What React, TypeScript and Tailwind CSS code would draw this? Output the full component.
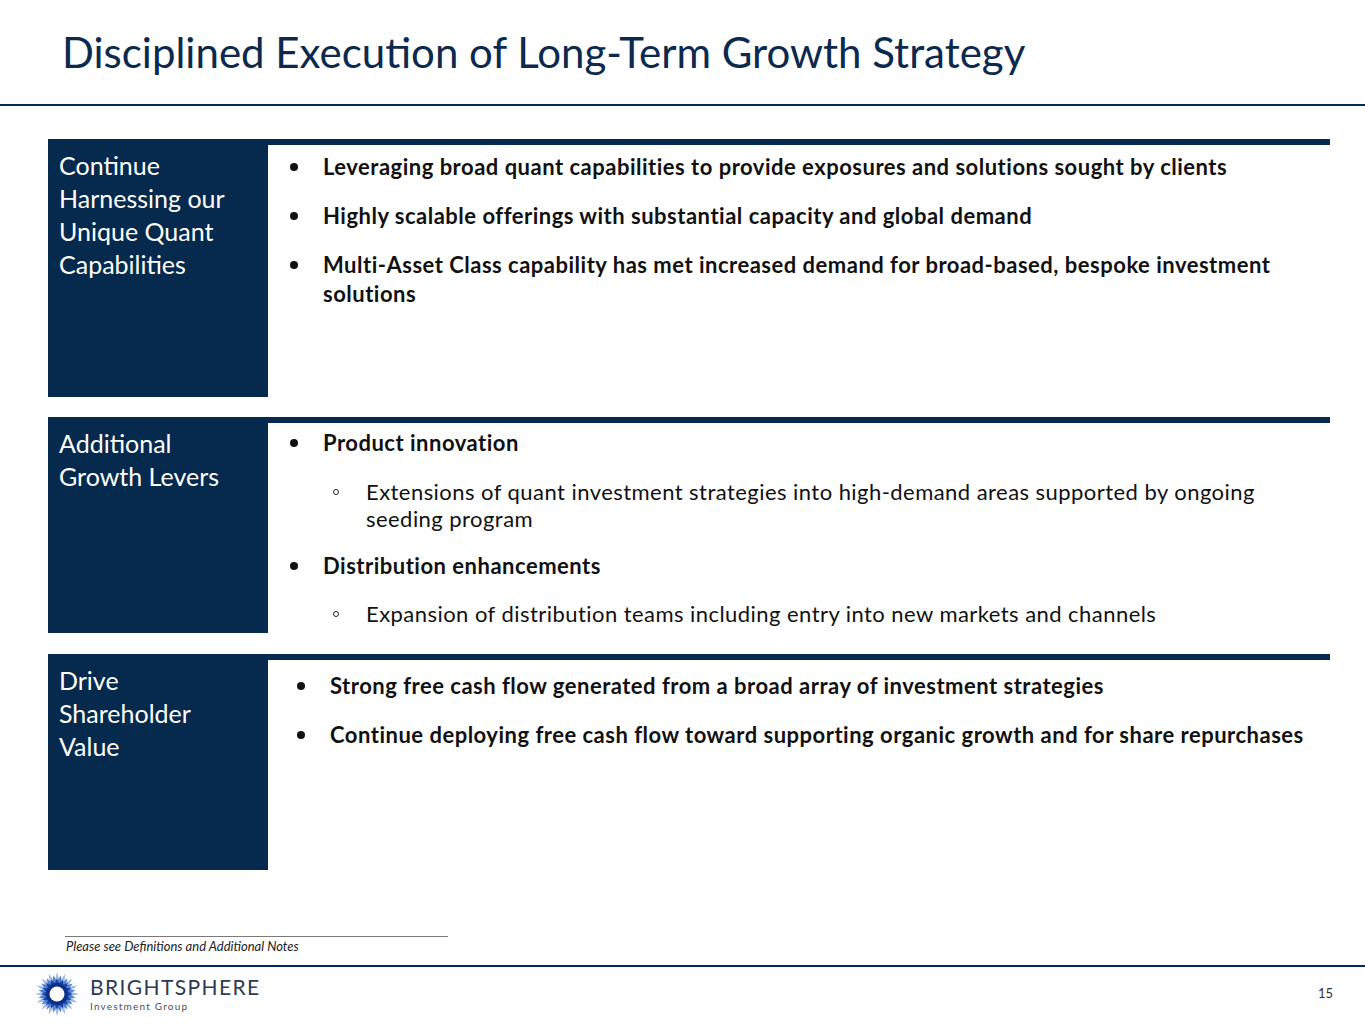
const NAVY = "#062a4d";

function Logo() {
  const star = (n: number, rOut: number, rIn: number, rot: number) => {
    const pts: string[] = [];
    for (let i = 0; i < n * 2; i++) {
      const r = i % 2 === 0 ? rOut : rIn;
      const a = ((i * 180) / n + rot - 90) * (Math.PI / 180);
      pts.push(`${(22 + r * Math.cos(a)).toFixed(2)},${(22 + r * Math.sin(a)).toFixed(2)}`);
    }
    return pts.join(" ");
  };
  return (
    <svg width="44" height="44" viewBox="0 0 44 44">
      <polygon points={star(16, 22, 13, 0)} fill="#9dbbe6" />
      <polygon points={star(16, 19, 12, 11.25)} fill="#4f7fd0" />
      <polygon points={star(16, 15.5, 11, 0)} fill="#1b45a8" />
      <circle cx="22" cy="22" r="11" fill="#0d2f8a" />
      <circle cx="22" cy="22" r="7.5" fill="#ffffff" />
    </svg>
  );
}

function Bullet({ children }: { children: React.ReactNode }) {
  return (
    <div className="flex">
      <span className="flex h-[29px] w-[30px] shrink-0 items-center">
        <span className="ml-[-3px] h-[8px] w-[8px] rounded-full bg-[#111]" />
      </span>
      <div className="text-[22px] font-bold leading-[29px] tracking-[0.5px]">{children}</div>
    </div>
  );
}

function SubBullet({ children }: { children: React.ReactNode }) {
  return (
    <div className="flex pl-[43px]">
      <span className="flex h-[27px] w-[30px] shrink-0 items-center">
        <span className="ml-[-3px] h-[6px] w-[6px] rounded-full border border-[#222]" />
      </span>
      <div className="text-[22px] leading-[27px] tracking-[0.45px]">{children}</div>
    </div>
  );
}

function Section({
  label,
  height,
  children,
  contentClass,
}: {
  label: React.ReactNode;
  height: string;
  children: React.ReactNode;
  contentClass: string;
}) {
  return (
    <div className={`flex ${height}`}>
      <div className="w-[220px] shrink-0 bg-[#062a4d] pl-[11px] pt-[10px] text-[25px] leading-[33px] text-white">
        {label}
      </div>
      <div className={`flex-1 border-t-[6px] border-[#062a4d] ${contentClass}`}>{children}</div>
    </div>
  );
}

export default function App() {
  return (
    <div
      className="h-[1024px] w-full overflow-hidden bg-white text-[#111]"
      style={{ fontFamily: "Lato, 'Open Sans', sans-serif" }}
    >
      {/* Title */}
      <div className="h-[104px] pl-[62px] pt-[27px]">
        <h1 className="text-[42px] leading-[50px] text-[#0b2a4e]">
          Disciplined Execution of Long-Term Growth Strategy
        </h1>
      </div>
      <div className="h-[2px] w-full" style={{ backgroundColor: NAVY }} />

      {/* Sections */}
      <div className="ml-[48px] mt-[33px] w-[1282px]">
        <Section
          height="h-[258px]"
          contentClass="pl-[25px] pt-[7px]"
          label={
            <>
              Continue
              <br />
              Harnessing our
              <br />
              Unique Quant
              <br />
              Capabilities
            </>
          }
        >
          <div className="flex flex-col gap-[20px]">
            <Bullet>Leveraging broad quant capabilities to provide exposures and solutions sought by clients</Bullet>
            <Bullet>Highly scalable offerings with substantial capacity and global demand</Bullet>
            <Bullet>
              Multi-Asset Class capability has met increased demand for broad-based, bespoke investment
              <br />
              solutions
            </Bullet>
          </div>
        </Section>

        <div className="h-[20px]" />

        <Section
          height="h-[216px]"
          contentClass="pl-[25px] pt-[5px]"
          label={
            <>
              Additional
              <br />
              Growth Levers
            </>
          }
        >
          <div className="flex flex-col">
            <Bullet>Product innovation</Bullet>
            <div className="h-[21px]" />
            <SubBullet>
              Extensions of quant investment strategies into high-demand areas supported by ongoing
              <br />
              seeding program
            </SubBullet>
            <div className="h-[19px]" />
            <Bullet>Distribution enhancements</Bullet>
            <div className="h-[20px]" />
            <SubBullet>Expansion of distribution teams including entry into new markets and channels</SubBullet>
          </div>
        </Section>

        <div className="h-[21px]" />

        <Section
          height="h-[216px]"
          contentClass="pl-[32px] pt-[11px]"
          label={
            <>
              Drive
              <br />
              Shareholder
              <br />
              Value
            </>
          }
        >
          <div className="flex flex-col gap-[20px]">
            <Bullet>Strong free cash flow generated from a broad array of investment strategies</Bullet>
            <Bullet>Continue deploying free cash flow toward supporting organic growth and for share repurchases</Bullet>
          </div>
        </Section>
      </div>

      {/* Footnote */}
      <div className="ml-[65px] mt-[66px] w-[383px] border-t border-[#7a7a7a]" />
      <p className="ml-[66px] mt-[1px] text-[13px] italic leading-[17px] text-[#222]">
        Please see Definitions and Additional Notes
      </p>
      <div className="mt-[10px] h-[2px] w-full" style={{ backgroundColor: NAVY }} />

      {/* Footer */}
      <div className="flex items-center pl-[35px] pr-[32px] pt-[5px]">
        <Logo />
        <div className="ml-[11px] flex flex-col">
          <span className="text-[21px] leading-[22px] tracking-[1.4px] text-[#2d3a52]">BRIGHTSPHERE</span>
          <span className="mt-[2px] text-[10px] leading-[12px] tracking-[1.2px] text-[#4a4f5a]">
            Investment Group
          </span>
        </div>
        <span className="ml-auto text-[13px] text-[#333]">15</span>
      </div>
    </div>
  );
}
